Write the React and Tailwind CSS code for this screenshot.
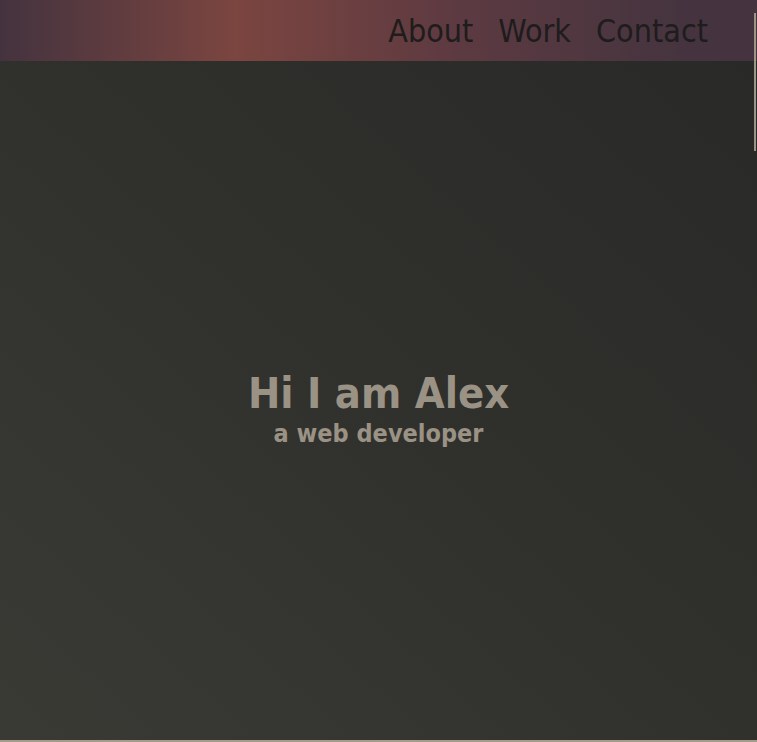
import React from 'react';

export default function App() {
  return (
    <div className="relative flex h-[742px] flex-col overflow-hidden font-['DejaVu_Sans_Condensed','DejaVu_Sans',sans-serif]">
      <header className="flex h-[61px] shrink-0 items-center justify-end gap-[25px] pr-[49px] bg-[linear-gradient(to_right,#44333f_0%,#7b4540_31%,#5d3a41_60%,#45343f_90%)]">
        <a href="#about" className="text-[32px] leading-none text-[#1e1c1c]">About</a>
        <a href="#work" className="text-[32px] leading-none text-[#1e1c1c]">Work</a>
        <a href="#contact" className="text-[32px] leading-none text-[#1e1c1c]">Contact</a>
      </header>

      <main className="flex flex-1 flex-col items-center justify-center bg-[linear-gradient(to_top_right,#3a3a35_0%,#30302d_50%,#292927_100%)] pt-[18px]">
        <h1 className="text-[43px] font-bold leading-[48px] text-[#9a9284]">Hi I am Alex</h1>
        <p className="text-[25px] font-bold leading-[34px] text-[#9a9284]">a web developer</p>
      </main>

      <div className="h-[2px] shrink-0 bg-[#a39c8b]" />

      {/* scroll indicator */}
      <div className="absolute right-[1px] top-[13px] h-[138px] w-[2px] bg-[#9c9585]" />
    </div>
  );
}
